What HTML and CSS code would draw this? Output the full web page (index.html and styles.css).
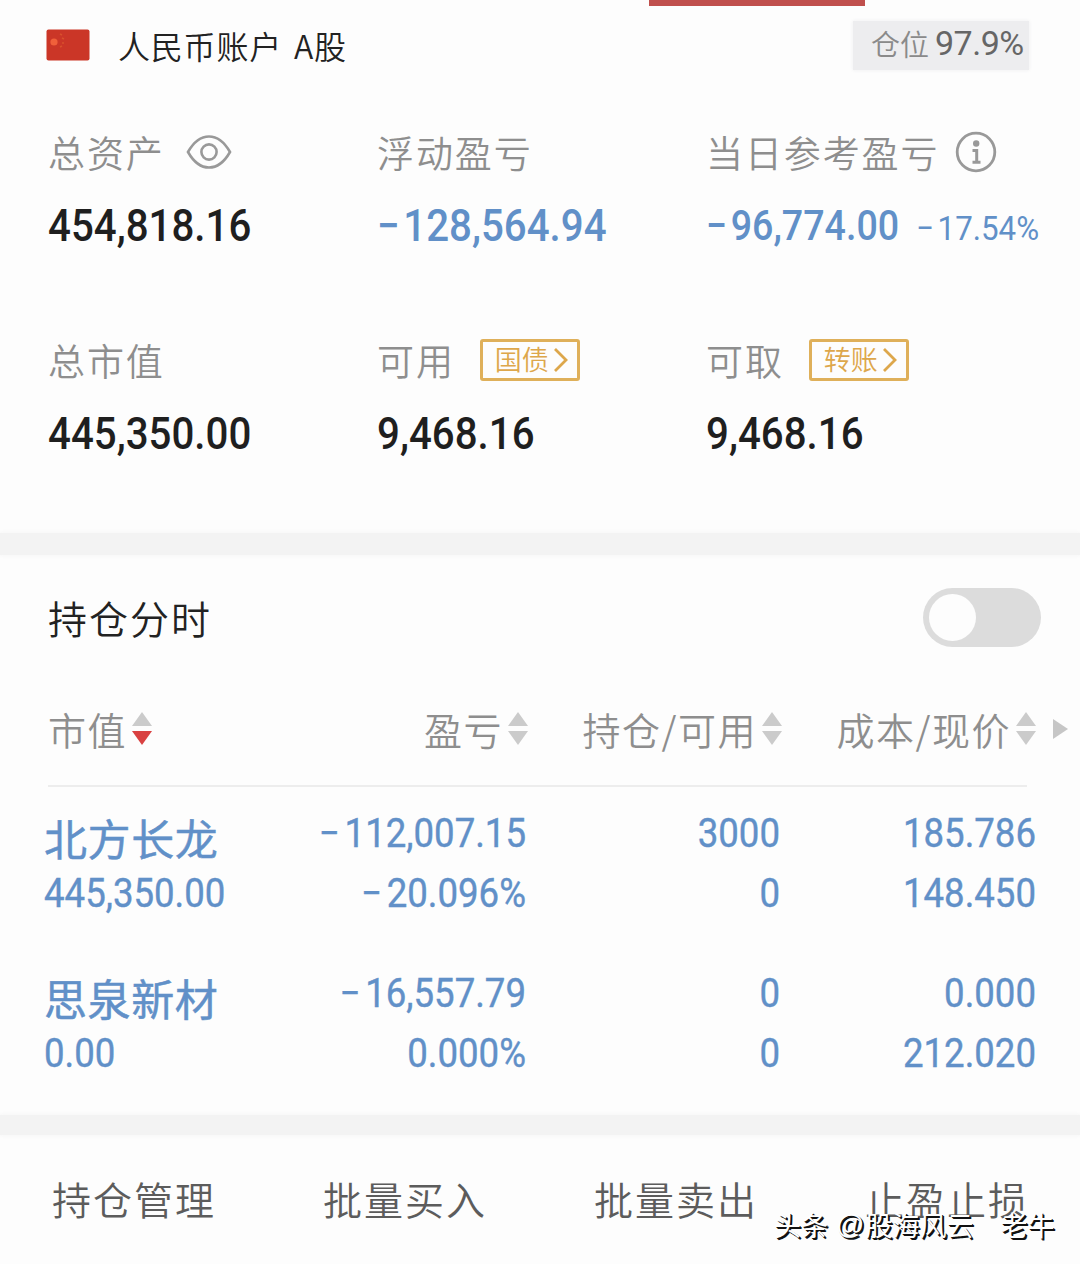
FILE: index.html
```html
<!DOCTYPE html>
<html lang="zh-CN">
<head>
<meta charset="utf-8">
<meta name="viewport" content="width=device-width, initial-scale=1.0">
<title>人民币账户 A股</title>
<link rel="stylesheet" href="styles.css">
</head>
<body>
<div class="page">
	<div class="tab_line"></div>

	<div class="account">
		<svg class="flag" width="44" height="32" viewBox="0 0 44 32">
			<rect x="0.5" y="0.5" width="43" height="31" rx="2" fill="#cb3627"/>
			<circle cx="8" cy="13" r="3.6" fill="#f0603a"/>
			<path d="M14 5l2 1M16 9l2 1M16 14l2 0M14 18l2-1" stroke="#d9502c" stroke-width="1.6"/>
		</svg>
		<div class="account_name">人民币账户 A股</div>
		<div class="position"><span>仓位</span><span class="position_num">97.9%</span></div>
	</div>

	<div class="assets">
		<div class="asset">
			<div class="label">总资产
				<svg class="eye" width="46" height="36" viewBox="0 0 46 36" fill="none" stroke="#999" stroke-width="2.6">
					<path d="M2 18C8 7.500 15 2.500 23 2.500S38 7.500 44 18C38 28.500 31 33.500 23 33.500S8 28.500 2 18Z"/>
					<circle cx="23" cy="18" r="7.600"/>
				</svg>
			</div>
			<div class="num">454,818.16</div>
		</div>
		<div class="asset">
			<div class="label">浮动盈亏</div>
			<div class="num blue"><span class="minus">−</span>128,564.94</div>
		</div>
		<div class="asset">
			<div class="label">当日参考盈亏
				<svg class="info" width="42" height="42" viewBox="0 0 42 42" fill="none" stroke="#999">
					<circle cx="21" cy="21" r="18.800" stroke-width="2.800"/>
					<circle cx="21.200" cy="12.500" r="3.200" fill="#999" stroke="none"/>
					<path d="M17.500 19.500H21.700V31M17.500 31.300H25.500" stroke-width="3"/>
				</svg>
			</div>
			<div class="day_row">
				<div class="num blue day_num"><span class="minus">−</span>96,774.00</div>
				<div class="num blue day_rate"><span class="minus">−</span>17.54%</div>
			</div>
		</div>
		<div class="asset">
			<div class="label">总市值</div>
			<div class="num">445,350.00</div>
		</div>
		<div class="asset">
			<div class="label">可用
				<span class="tag">国债<svg width="16" height="26" viewBox="0 0 16 26"><path d="M2 2L13 13L2 24" fill="none" stroke="#dda74b" stroke-width="2.800"/></svg></span>
			</div>
			<div class="num">9,468.16</div>
		</div>
		<div class="asset">
			<div class="label">可取
				<span class="tag">转账<svg width="16" height="26" viewBox="0 0 16 26"><path d="M2 2L13 13L2 24" fill="none" stroke="#dda74b" stroke-width="2.800"/></svg></span>
			</div>
			<div class="num">9,468.16</div>
		</div>
	</div>

	<div class="band"></div>

	<div class="section_header">
		<div>持仓分时</div>
		<div class="switch"><div class="knob"></div></div>
	</div>

	<div class="holdings">
		<div class="row head">
			<div class="cell first">市值<span class="sort down"></span></div>
			<div class="cell">盈亏<span class="sort"></span></div>
			<div class="cell">持仓/可用<span class="sort"></span></div>
			<div class="cell">成本/现价<span class="sort"></span></div>
			<div class="more"></div>
		</div>
		<div class="row stock">
			<div class="first"><div class="name">北方长龙</div><div class="val">445,350.00</div></div>
			<div><div class="val"><span class="minus">−</span>112,007.15</div><div class="val"><span class="minus">−</span>20.096%</div></div>
			<div><div class="val">3000</div><div class="val">0</div></div>
			<div><div class="val">185.786</div><div class="val">148.450</div></div>
		</div>
		<div class="row stock">
			<div class="first"><div class="name">思泉新材</div><div class="val">0.00</div></div>
			<div><div class="val"><span class="minus">−</span>16,557.79</div><div class="val">0.000%</div></div>
			<div><div class="val">0</div><div class="val">0</div></div>
			<div><div class="val">0.000</div><div class="val">212.020</div></div>
		</div>
	</div>

	<div class="band band_bottom"></div>

	<div class="actions">
		<div>持仓管理</div>
		<div>批量买入</div>
		<div>批量卖出</div>
		<div>止盈止损</div>
	</div>

	<div class="watermark"><span>头条</span><span class="at">@</span><span>股海风云</span><span class="wm_last">老牛</span></div>
</div>
</body>
</html>
```
FILE: styles.css
```css
* {
	box-sizing: border-box;
}
body {
	margin: 0;
	background-color: #fdfdfd;
	font-family: "Noto Sans CJK SC", sans-serif;
	font-weight: 350;
}
svg {
	display: block;
	flex: none;
}
.page {
	position: relative;
	width: 1080px;
	height: 1264px;
	overflow: hidden;
	white-space: nowrap;
}
.tab_line {
	width: 216px;
	height: 6px;
	margin-left: 649px;
	background-color: #c0504d;
}

/* account bar */
.account {
	display: flex;
	align-items: flex-start;
	height: 110px;
	padding-left: 46px;
}
.flag {
	margin-top: 23px;
}
.account_name {
	margin: 19px 0 0 28px;
	width: 735px;
	font-size: 32px;
	line-height: 40px;
	letter-spacing: 0.8px;
	word-spacing: 4px;
	color: #222;
}
.position {
	display: flex;
	align-items: center;
	margin-top: 15px;
	width: 176px;
	height: 49px;
	padding: 0 0 6px 18px;
	background-color: #ededef;
	box-shadow: 0 0 4px #ededef;
	font-size: 29px;
	color: #8a8a8a;
}
.position_num {
	margin-left: 6px;
	font-family: Roboto, sans-serif;
	font-weight: 400;
	font-size: 34px;
	letter-spacing: -0.5px;
	color: #666;
}

/* six figures, two rows of three */
.assets {
	display: grid;
	grid-template-columns: 329px 329px 374px;
	grid-template-rows: 208px 208px;
	height: 417px;
	padding-left: 48px;
}
.label {
	display: flex;
	align-items: center;
	height: 72px;
	font-size: 37px;
	letter-spacing: 1.9px;
	color: #8e8e8e;
}
.eye {
	margin-left: 21px;
}
.info {
	margin-left: 16px;
}
.num {
	height: 70px;
	line-height: 76px;
	font-family: Roboto, sans-serif;
	font-weight: 500;
	font-size: 45px;
	color: #1f1f1f;
	transform: scaleX(0.895);
	transform-origin: left;
}
.minus {
	margin-right: 4px;
}
.blue {
	color: #6190c8;
}
.day_row {
	display: flex;
}
.day_num {
	width: 210px;
	font-size: 42px;
}
.day_rate {
	font-size: 34px;
	font-weight: 400;
	line-height: 80px;
	transform: scaleX(0.92);
}
.tag {
	display: flex;
	align-items: center;
	width: 100px;
	height: 42px;
	margin: -1px 0 0 25px;
	padding: 0 0 2px 12px;
	border: 3px solid #dfb05a;
	border-radius: 3px;
	font-size: 27px;
	letter-spacing: 0;
	color: #dda74b;
}
.tag svg {
	margin: 2px 0 0 4px;
}

.band {
	height: 22px;
	background-color: #f3f3f3;
	box-shadow: 0 0 5px #f3f3f3;
}

.section_header {
	display: flex;
	align-items: center;
	justify-content: space-between;
	height: 125px;
	padding: 0 39px 0 48px;
	font-size: 39px;
	letter-spacing: 2px;
	color: #222;
}
.section_header > div:first-child {
	padding-bottom: 2px;
}
.switch {
	width: 118px;
	height: 59px;
	padding: 6px;
	border-radius: 30px;
	background-color: #dcdcdc;
}
.knob {
	width: 47px;
	height: 47px;
	border-radius: 50%;
	background-color: #fdfdfd;
}

/* holdings table */
.holdings {
	height: 435px;
}
.row {
	display: grid;
	grid-template-columns: 240px 242px 254px 256px auto;
	padding-left: 44px;
	text-align: right;
}
.head {
	height: 107px;
	padding-top: 17px;
	position: relative;
	font-size: 38px;
	letter-spacing: 1.5px;
	color: #8e8e8e;
}
.head::after {
	content: "";
	position: absolute;
	left: 48px;
	right: 53px;
	bottom: 0;
	height: 2px;
	background-color: #ededed;
}
.cell {
	display: flex;
	align-items: center;
	justify-content: flex-end;
	height: 62px;
}
.cell:nth-child(4) {
	padding-right: 2px;
}
.cell.first {
	justify-content: flex-start;
	padding-left: 4px;
}
.first {
	text-align: left;
}
.sort {
	display: flex;
	flex-direction: column;
	gap: 5px;
	margin: 1px -2px 0 5px;
}
.sort::before, .sort::after {
	content: "";
	border: 10px solid transparent;
}
.sort::before {
	border-top: 0;
	border-bottom: 14px solid #cbcbcb;
}
.sort::after {
	border-bottom: 0;
	border-top: 14px solid #cbcbcb;
}
.sort.down::after {
	border-top-color: #d94141;
}
.more {
	align-self: start;
	width: 0;
	margin: 22px 0 0 17px;
	border: 10px solid transparent;
	border-left: 15px solid #c6c6c6;
	border-right: 0;
}
.stock {
	height: 160px;
	padding-top: 17px;
	color: #6190c8;
}
.name {
	height: 60px;
	line-height: 66px;
	font-size: 43px;
	font-weight: 400;
	letter-spacing: 0.6px;
	-webkit-text-stroke: 0.5px #6190c8;
}
.val {
	height: 60px;
	line-height: 60px;
	font-family: Roboto, sans-serif;
	font-weight: 400;
	font-size: 40px;
	-webkit-text-stroke: 0.4px #6190c8;
	transform: scaleX(0.915);
	transform-origin: right;
}
.val .minus {
	margin-right: 5px;
}
.first .val {
	transform-origin: left;
}

.band_bottom {
	height: 20px;
}
.actions {
	display: grid;
	grid-template-columns: repeat(4, 271px);
	padding: 31px 0 0 52px;
	font-size: 39px;
	line-height: 64px;
	letter-spacing: 2px;
	color: #5c5c5c;
}

/* author mark over the corner of the page */
.watermark {
	position: absolute;
	left: 774px;
	top: 1205px;
	display: flex;
	font-size: 27px;
	line-height: 40px;
	font-weight: 400;
	color: #fff;
	text-shadow: 1px 1px 0 #111, 2px 2px 0 #111;
}
.watermark .at {
	margin: 0 1px 0 8px;
	font-family: "Liberation Sans", sans-serif;
	font-size: 28px;
}
.watermark .wm_last {
	margin-left: 27px;
}
```
